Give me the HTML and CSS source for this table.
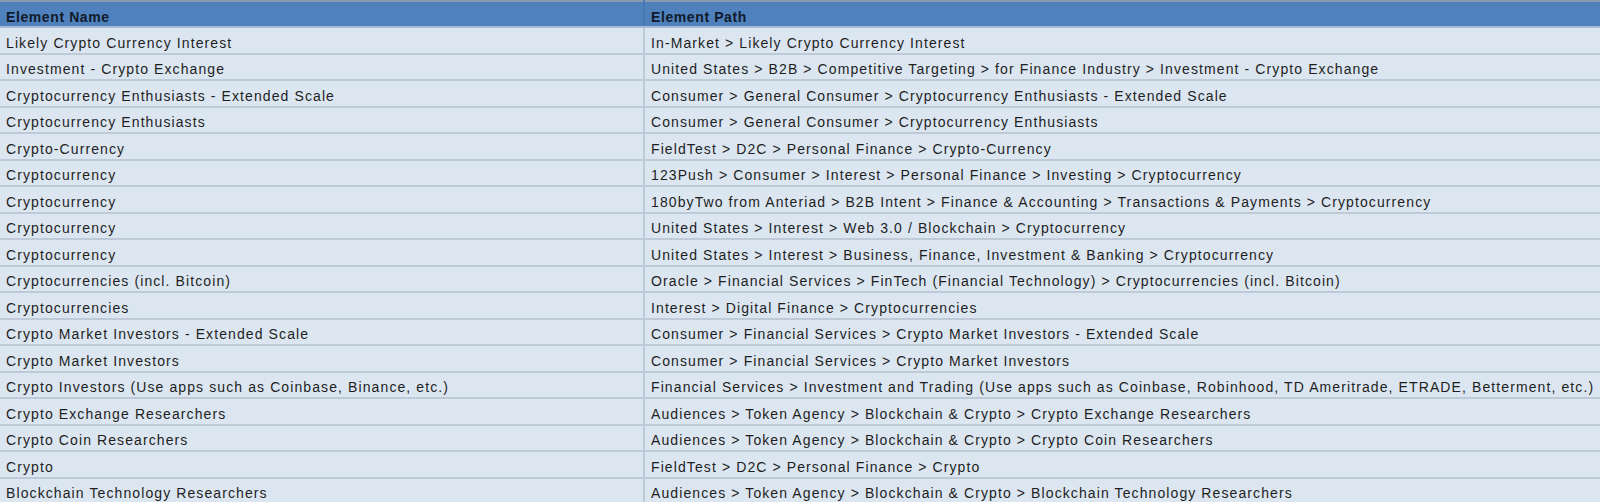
FILE: index.html
```html
<!DOCTYPE html>
<html>
<head>
<meta charset="utf-8">
<link rel="stylesheet" href="styles.css">
</head>
<body>
<table class="sheet">
<thead>
<tr><th class="c1">Element Name</th><th class="c2">Element Path</th></tr>
</thead>
<tbody>
<tr><td>Likely Crypto Currency Interest</td><td>In-Market &gt; Likely Crypto Currency Interest</td></tr>
<tr><td>Investment - Crypto Exchange</td><td>United States &gt; B2B &gt; Competitive Targeting &gt; for Finance Industry &gt; Investment - Crypto Exchange</td></tr>
<tr><td>Cryptocurrency Enthusiasts - Extended Scale</td><td>Consumer &gt; General Consumer &gt; Cryptocurrency Enthusiasts - Extended Scale</td></tr>
<tr><td>Cryptocurrency Enthusiasts</td><td>Consumer &gt; General Consumer &gt; Cryptocurrency Enthusiasts</td></tr>
<tr><td>Crypto-Currency</td><td>FieldTest &gt; D2C &gt; Personal Finance &gt; Crypto-Currency</td></tr>
<tr><td>Cryptocurrency</td><td>123Push &gt; Consumer &gt; Interest &gt; Personal Finance &gt; Investing &gt; Cryptocurrency</td></tr>
<tr><td>Cryptocurrency</td><td>180byTwo from Anteriad &gt; B2B Intent &gt; Finance &amp; Accounting &gt; Transactions &amp; Payments &gt; Cryptocurrency</td></tr>
<tr><td>Cryptocurrency</td><td>United States &gt; Interest &gt; Web 3.0 / Blockchain &gt; Cryptocurrency</td></tr>
<tr><td>Cryptocurrency</td><td>United States &gt; Interest &gt; Business, Finance, Investment &amp; Banking &gt; Cryptocurrency</td></tr>
<tr><td>Cryptocurrencies (incl. Bitcoin)</td><td>Oracle &gt; Financial Services &gt; FinTech (Financial Technology) &gt; Cryptocurrencies (incl. Bitcoin)</td></tr>
<tr><td>Cryptocurrencies</td><td>Interest &gt; Digital Finance &gt; Cryptocurrencies</td></tr>
<tr><td>Crypto Market Investors - Extended Scale</td><td>Consumer &gt; Financial Services &gt; Crypto Market Investors - Extended Scale</td></tr>
<tr><td>Crypto Market Investors</td><td>Consumer &gt; Financial Services &gt; Crypto Market Investors</td></tr>
<tr><td>Crypto Investors (Use apps such as Coinbase, Binance, etc.)</td><td>Financial Services &gt; Investment and Trading (Use apps such as Coinbase, Robinhood, TD Ameritrade, ETRADE, Betterment, etc.)</td></tr>
<tr><td>Crypto Exchange Researchers</td><td>Audiences &gt; Token Agency &gt; Blockchain &amp; Crypto &gt; Crypto Exchange Researchers</td></tr>
<tr><td>Crypto Coin Researchers</td><td>Audiences &gt; Token Agency &gt; Blockchain &amp; Crypto &gt; Crypto Coin Researchers</td></tr>
<tr><td>Crypto</td><td>FieldTest &gt; D2C &gt; Personal Finance &gt; Crypto</td></tr>
<tr><td>Blockchain Technology Researchers</td><td>Audiences &gt; Token Agency &gt; Blockchain &amp; Crypto &gt; Blockchain Technology Researchers</td></tr>
</tbody>
</table>
</body>
</html>
```
FILE: styles.css
```css
html, body {
  margin: 0;
  padding: 0;
  background: #dce6f1;
  overflow: hidden;
}
.sheet {
  width: 1600px;
  border-collapse: collapse;
  table-layout: fixed;
  font-family: "Liberation Sans", Arial, sans-serif;
  font-size: 14px;
  line-height: 16px;
  letter-spacing: 1.1px;
  color: #1e1e1e;
  border-top: 2px solid #8a9bb0;
}
.sheet th {
  background: #4f81bd;
  color: #111a2a;
  font-weight: bold;
  letter-spacing: 0.6px;
  text-align: left;
  height: 23px;
  padding: 0 6px 1px;
  border-bottom: 2px solid #a9bbd2;
  vertical-align: bottom;
}
.sheet .c1 { width: 631px; }
.sheet td {
  height: 22.5px;
  padding: 0 6px 2px;
  border-bottom: 2px solid #bfcad8;
  background: #dce6f1;
  white-space: nowrap;
  overflow: hidden;
  vertical-align: bottom;
}
.sheet td + td, .sheet th + th {
  border-left: 2px solid #bfcad8;
}
.sheet th + th {
  border-left-color: #4a78b0;
}
```
